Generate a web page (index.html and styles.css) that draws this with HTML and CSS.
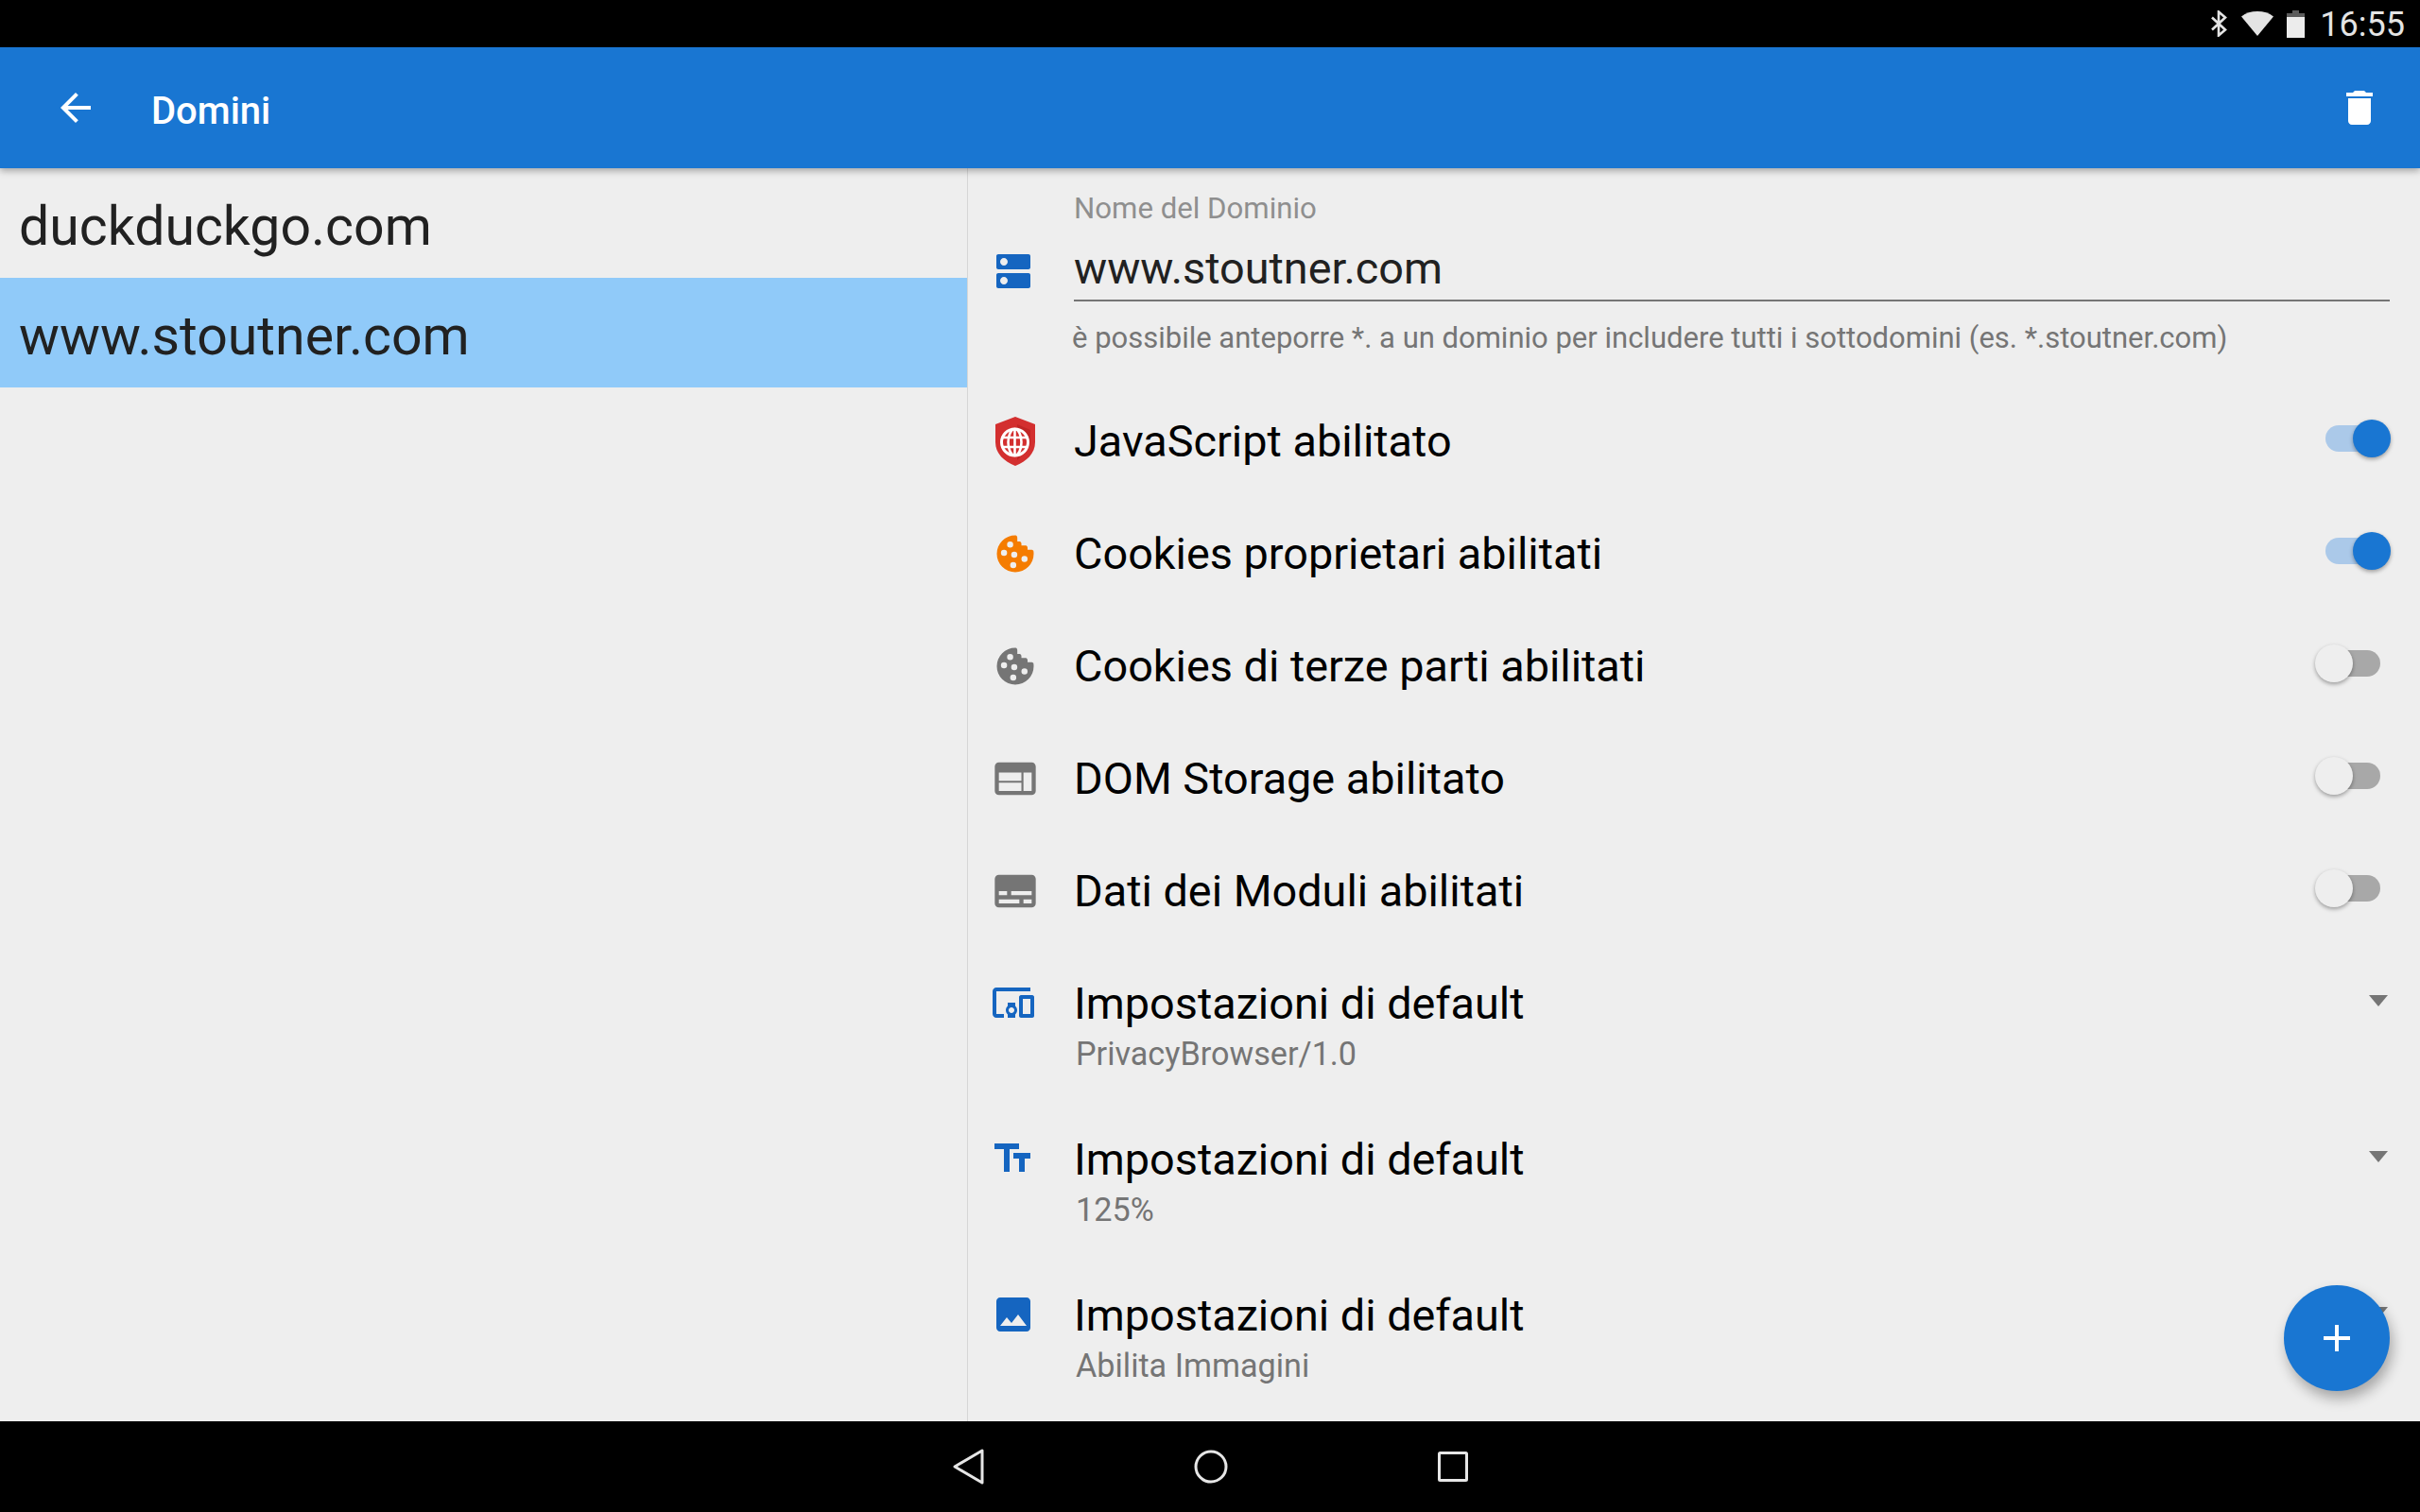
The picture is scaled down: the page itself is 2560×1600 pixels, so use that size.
FILE: index.html
```html
<!DOCTYPE html>
<html lang="en">

<head>
    <meta charset="UTF-8">
    <title>Domini</title>
    <link rel="stylesheet" href="styles.css">
</head>

<body>
    <div class="statusBar">
        <svg class="btIcon" viewBox="0 0 18 28"><path d="M2 7.500l14 13-7 6V1.500l7 6-14 13" fill="none" stroke="#e4e4e4" stroke-width="2.600"/></svg>
        <svg class="wifiIcon" viewBox="0 0 34 28"><path d="M17 27L0 6.500C4.500 2.800 10.500 1 17 1s12.500 1.800 17 5.500z" fill="#e4e4e4"/></svg>
        <svg class="batteryIcon" viewBox="0 0 19 29"><path d="M6 0h7v3h6v26H0V3h6z" fill="#ececec"/><path d="M6 0h7v3h6v4H0V3h6z" fill="#5c5c5c"/></svg>
        <span class="clock">16:55</span>
    </div>

    <header class="appBar">
        <svg class="backIcon" viewBox="0 0 24 24"><path d="M20 11H7.830l5.590-5.590L12 4l-8 8 8 8 1.410-1.410L7.830 13H20v-2z" fill="#fff"/></svg>
        <div class="appTitle">Domini</div>
        <svg class="trashIcon" viewBox="0 0 24 24"><path d="M6 19c0 1.100.9 2 2 2h8c1.100 0 2-.9 2-2V7H6v12zM19 4h-3.500l-1-1h-5l-1 1H5v2h14V4z" fill="#fff"/></svg>
    </header>

    <main class="content">
        <div class="domainList">
            <div class="domainItem">duckduckgo.com</div>
            <div class="domainItem selected">www.stoutner.com</div>
        </div>

        <div class="settings">
            <div class="nameField">
                <svg class="icon dnsIcon" viewBox="0 0 24 24"><path d="M20 13H4c-.55 0-1 .45-1 1v6c0 .55.45 1 1 1h16c.55 0 1-.45 1-1v-6c0-.55-.45-1-1-1zM7 19c-1.100 0-2-.9-2-2s.9-2 2-2 2 .9 2 2-.9 2-2 2zM20 3H4c-.55 0-1 .45-1 1v6c0 .55.45 1 1 1h16c.55 0 1-.45 1-1V4c0-.55-.45-1-1-1zM7 9c-1.100 0-2-.9-2-2s.9-2 2-2 2 .9 2 2-.9 2-2 2z" fill="#1565c0"/></svg>
                <div class="fieldBody">
                    <div class="fieldLabel">Nome del Dominio</div>
                    <div class="fieldValue">www.stoutner.com</div>
                    <div class="fieldHint">è possibile anteporre *. a un dominio per includere tutti i sottodomini (es. *.stoutner.com)</div>
                </div>
            </div>

            <div class="row">
                <svg class="icon bigIcon" viewBox="0 0 44 52">
                    <path d="M22 0L43 8V27C43 39 34 47 22 52C10 47 1 39 1 27V8z" fill="#d32f2f"/>
                    <path d="M24 8L38 14V30L26 44L24 46z" fill="#c02525"/>
                    <circle cx="21.500" cy="27" r="14" fill="#d32f2f" stroke="#fff" stroke-width="3"/>
                    <path d="M8 22h27M8 32h27M21.500 13v28" stroke="#fff" stroke-width="2.600" fill="none"/>
                    <ellipse cx="21.500" cy="27" rx="7" ry="14" stroke="#fff" stroke-width="2.600" fill="none"/>
                </svg>
                <div class="rowText">JavaScript abilitato</div>
                <div class="toggle on"><span class="thumb"></span></div>
            </div>
            <div class="row">
                <svg class="icon bigIcon" viewBox="0 0 24 24"><path d="M12,3A9,9 0 0,0 3,12A9,9 0 0,0 12,21A9,9 0 0,0 21,12C21,11.5 20.96,11 20.87,10.5C20.6,10 20,10 20,10H18V9C18,8 17,8 17,8H15V7C15,6 14,6 14,6H13V4C13,3 12,3 12,3M9.5,6A1.5,1.5 0 0,1 11,7.5A1.5,1.5 0 0,1 9.5,9A1.5,1.5 0 0,1 8,7.5A1.5,1.5 0 0,1 9.5,6M6.5,10A1.5,1.5 0 0,1 8,11.5A1.5,1.5 0 0,1 6.5,13A1.5,1.5 0 0,1 5,11.5A1.5,1.5 0 0,1 6.5,10M11.5,11A1.5,1.5 0 0,1 13,12.5A1.5,1.5 0 0,1 11.5,14A1.5,1.5 0 0,1 10,12.5A1.5,1.5 0 0,1 11.5,11M16.5,13A1.5,1.5 0 0,1 18,14.5A1.5,1.5 0 0,1 16.5,16H16.5A1.5,1.5 0 0,1 15,14.5H15A1.5,1.5 0 0,1 16.5,13M11,16A1.5,1.5 0 0,1 12.5,17.5A1.5,1.5 0 0,1 11,19A1.5,1.5 0 0,1 9.5,17.5A1.5,1.5 0 0,1 11,16Z" fill="#f57c00"/></svg>
                <div class="rowText">Cookies proprietari abilitati</div>
                <div class="toggle on"><span class="thumb"></span></div>
            </div>
            <div class="row">
                <svg class="icon bigIcon" viewBox="0 0 24 24"><path d="M12,3A9,9 0 0,0 3,12A9,9 0 0,0 12,21A9,9 0 0,0 21,12C21,11.5 20.96,11 20.87,10.5C20.6,10 20,10 20,10H18V9C18,8 17,8 17,8H15V7C15,6 14,6 14,6H13V4C13,3 12,3 12,3M9.5,6A1.5,1.5 0 0,1 11,7.5A1.5,1.5 0 0,1 9.5,9A1.5,1.5 0 0,1 8,7.5A1.5,1.5 0 0,1 9.5,6M6.5,10A1.5,1.5 0 0,1 8,11.5A1.5,1.5 0 0,1 6.5,13A1.5,1.5 0 0,1 5,11.5A1.5,1.5 0 0,1 6.5,10M11.5,11A1.5,1.5 0 0,1 13,12.5A1.5,1.5 0 0,1 11.5,14A1.5,1.5 0 0,1 10,12.5A1.5,1.5 0 0,1 11.5,11M16.5,13A1.5,1.5 0 0,1 18,14.5A1.5,1.5 0 0,1 16.5,16H16.5A1.5,1.5 0 0,1 15,14.5H15A1.5,1.5 0 0,1 16.5,13M11,16A1.5,1.5 0 0,1 12.5,17.5A1.5,1.5 0 0,1 11,19A1.5,1.5 0 0,1 9.5,17.5A1.5,1.5 0 0,1 11,16Z" fill="#757575"/></svg>
                <div class="rowText">Cookies di terze parti abilitati</div>
                <div class="toggle"><span class="thumb"></span></div>
            </div>
            <div class="row">
                <svg class="icon bigIcon" viewBox="0 0 24 24"><path d="M20 4H4c-1.100 0-1.990.9-1.990 2L2 18c0 1.100.9 2 2 2h16c1.100 0 2-.9 2-2V6c0-1.100-.9-2-2-2zm-5 14H4v-4h11v4zm0-5H4V9h11v4zm5 5h-4V9h4v9z" fill="#757575"/></svg>
                <div class="rowText">DOM Storage abilitato</div>
                <div class="toggle"><span class="thumb"></span></div>
            </div>
            <div class="row">
                <svg class="icon bigIcon" viewBox="0 0 24 24"><path d="M20 4H4c-1.100 0-2 .9-2 2v12c0 1.100.9 2 2 2h16c1.100 0 2-.9 2-2V6c0-1.100-.9-2-2-2zM4 12h4v2H4v-2zm10 6H4v-2h10v2zm6 0h-4v-2h4v2zm0-4H10v-2h10v2z" fill="#757575"/></svg>
                <div class="rowText">Dati dei Moduli abilitati</div>
                <div class="toggle"><span class="thumb"></span></div>
            </div>

            <div class="spinnerRow">
                <svg class="icon" viewBox="0 0 24 24"><path d="M3 6h18V4H3c-1.100 0-2 .9-2 2v12c0 1.100.9 2 2 2h4v-2H3V6zm10 6H9v1.780c-.61.55-1 1.330-1 2.220s.39 1.670 1 2.220V20h4v-1.780c.61-.55 1-1.340 1-2.220s-.39-1.670-1-2.220V12zm-2 5.500c-.83 0-1.500-.67-1.500-1.500s.67-1.500 1.500-1.500 1.500.67 1.500 1.500-.67 1.500-1.500 1.500zM22 8h-6c-.5 0-1 .5-1 1v10c0 .5.5 1 1 1h6c.5 0 1-.5 1-1V9c0-.5-.5-1-1-1zm-1 10h-4v-8h4v8z" fill="#1565c0"/></svg>
                <div class="spinnerText">
                    <div class="rowText">Impostazioni di default</div>
                    <div class="rowSub">PrivacyBrowser/1.0</div>
                </div>
                <span class="arrow"></span>
            </div>
            <div class="spinnerRow">
                <svg class="icon" viewBox="0 0 24 24"><path d="M15 4v3h-5v12H7V7H2V4h13zm6 8h-3v7h-3v-7h-3V9h9v3z" fill="#1565c0"/></svg>
                <div class="spinnerText">
                    <div class="rowText">Impostazioni di default</div>
                    <div class="rowSub">125%</div>
                </div>
                <span class="arrow"></span>
            </div>
            <div class="spinnerRow">
                <svg class="icon" viewBox="0 0 24 24"><path d="M21 19V5c0-1.100-.9-2-2-2H5c-1.100 0-2 .9-2 2v14c0 1.100.9 2 2 2h14c1.100 0 2-.9 2-2zM8.500 13.500l2.500 3.010L14.500 12l4.500 6H5l3.500-4.500z" fill="#1565c0"/></svg>
                <div class="spinnerText">
                    <div class="rowText">Impostazioni di default</div>
                    <div class="rowSub">Abilita Immagini</div>
                </div>
                <span class="arrow"></span>
            </div>
        </div>

        <div class="fab">
            <svg class="plusIcon" viewBox="0 0 28 28"><path d="M12 0h4v12h12v4H16v12h-4V16H0v-4h12z" fill="#fff"/></svg>
        </div>
    </main>

    <nav class="navBar">
        <svg class="navBack" viewBox="0 0 33 38"><path d="M2 19L31 2V36z" fill="none" stroke="#e6e6e6" stroke-width="3" stroke-linejoin="round"/></svg>
        <svg class="navHome" viewBox="0 0 36 36"><circle cx="18" cy="18" r="16" fill="none" stroke="#e6e6e6" stroke-width="3"/></svg>
        <svg class="navRecent" viewBox="0 0 32 32"><rect x="1.500" y="1.500" width="29" height="29" rx="1" fill="none" stroke="#e6e6e6" stroke-width="3"/></svg>
    </nav>
</body>

</html>
```
FILE: styles.css
```css
html,
body {
    margin: 0;
    padding: 0;
}

body {
    width: 2560px;
    height: 1600px;
    display: flex;
    flex-direction: column;
    overflow: hidden;
    font-family: 'Roboto', sans-serif;
    background: #000000;
}

.statusBar {
    height: 50px;
    display: flex;
    align-items: center;
    justify-content: flex-end;
    padding-right: 16px;
    background: #000000;
}

.btIcon {
    width: 18px;
    height: 28px;
    margin-right: 15px;
}

.wifiIcon {
    width: 34px;
    height: 28px;
    margin-right: 14px;
}

.batteryIcon {
    width: 19px;
    height: 29px;
    margin-right: 16px;
}

.clock {
    padding-top: 2px;
    font-size: 36px;
    color: #e4e4e4;
}

.appBar {
    height: 128px;
    display: flex;
    align-items: center;
    padding: 0 40px 0 56px;
    background: #1976d2;
    box-shadow: 0 3px 7px rgba(0, 0, 0, 0.3);
    position: relative;
    z-index: 1;
}

.backIcon,
.trashIcon {
    width: 48px;
    height: 48px;
}

.appTitle {
    flex: 1;
    margin-left: 56px;
    padding-top: 6px;
    font-size: 40px;
    font-weight: 500;
    color: #ffffff;
}

.content {
    height: 1326px;
    display: flex;
    background: #eeeeee;
    position: relative;
    overflow: hidden;
}

.domainList {
    width: 1023px;
    border-right: 1px solid #d6d6d6;
}

.domainItem {
    height: 116px;
    display: flex;
    align-items: center;
    padding: 6px 0 0 20px;
    box-sizing: border-box;
    font-size: 57.2px;
    color: #212121;
}

.domainItem.selected {
    background: #90caf9;
}

.settings {
    flex: 1;
    padding-right: 32px;
}

.nameField {
    display: flex;
    height: 230px;
    padding-top: 23px;
    box-sizing: border-box;
}

.icon {
    width: 48px;
    height: 48px;
    margin-left: 24px;
    flex-shrink: 0;
}

.bigIcon {
    width: 52px;
    height: 52px;
    margin-bottom: 2px;
}

.dnsIcon {
    margin-top: 62px;
}

.fieldBody {
    flex: 1;
    margin-left: 40px;
}

.fieldLabel {
    font-size: 31.2px;
    line-height: 40px;
    color: #8f8f8f;
}

.fieldValue {
    margin-top: 15px;
    padding-bottom: 5px;
    font-size: 46.8px;
    line-height: 56px;
    color: #212121;
    border-bottom: 2px solid #757575;
}

.fieldHint {
    margin: 19px 0 0 -2px;
    font-size: 31px;
    line-height: 40px;
    color: #757575;
}

.row {
    height: 119px;
    display: flex;
    align-items: center;
}

.rowText {
    font-size: 46.8px;
    line-height: 56px;
    color: #000000;
}

.row .rowText {
    flex: 1;
    margin: 0 0 2px 36px;
}

.toggle {
    width: 58px;
    height: 28px;
    margin: 0 10px 8px 0;
    border-radius: 14px;
    background: #a8a8a8;
    position: relative;
}

.toggle.on {
    background: #abc9e9;
}

.thumb {
    position: absolute;
    top: -6px;
    left: -11px;
    width: 40px;
    height: 40px;
    border-radius: 50%;
    background: #eeeeee;
    box-shadow: 0 2px 4px rgba(0, 0, 0, 0.35);
}

.toggle.on .thumb {
    left: 29px;
    background: #1976d2;
}

.spinnerRow {
    height: 165px;
    display: flex;
    padding-top: 31px;
    box-sizing: border-box;
}

.spinnerRow .icon {
    margin-top: 3px;
}

.spinnerText {
    flex: 1;
    margin-left: 40px;
}

.rowSub {
    margin-left: 2px;
    font-size: 34.2px;
    line-height: 50px;
    color: #757575;
}

.arrow {
    width: 0;
    height: 0;
    margin: 19px 2px 0 0;
    border-left: 10px solid transparent;
    border-right: 10px solid transparent;
    border-top: 12px solid #757575;
}

.fab {
    position: absolute;
    left: 2416px;
    top: 1182px;
    width: 112px;
    height: 112px;
    border-radius: 50%;
    background: #1976d2;
    box-shadow: 3px 8px 14px rgba(0, 0, 0, 0.3);
    display: flex;
    align-items: center;
    justify-content: center;
}

.plusIcon {
    width: 28px;
    height: 28px;
}

.navBar {
    height: 96px;
    display: flex;
    align-items: center;
    justify-content: center;
    gap: 222px;
    background: #000000;
}

.navBack {
    width: 33px;
    height: 38px;
}

.navHome {
    width: 36px;
    height: 36px;
}

.navRecent {
    width: 32px;
    height: 32px;
}
```
